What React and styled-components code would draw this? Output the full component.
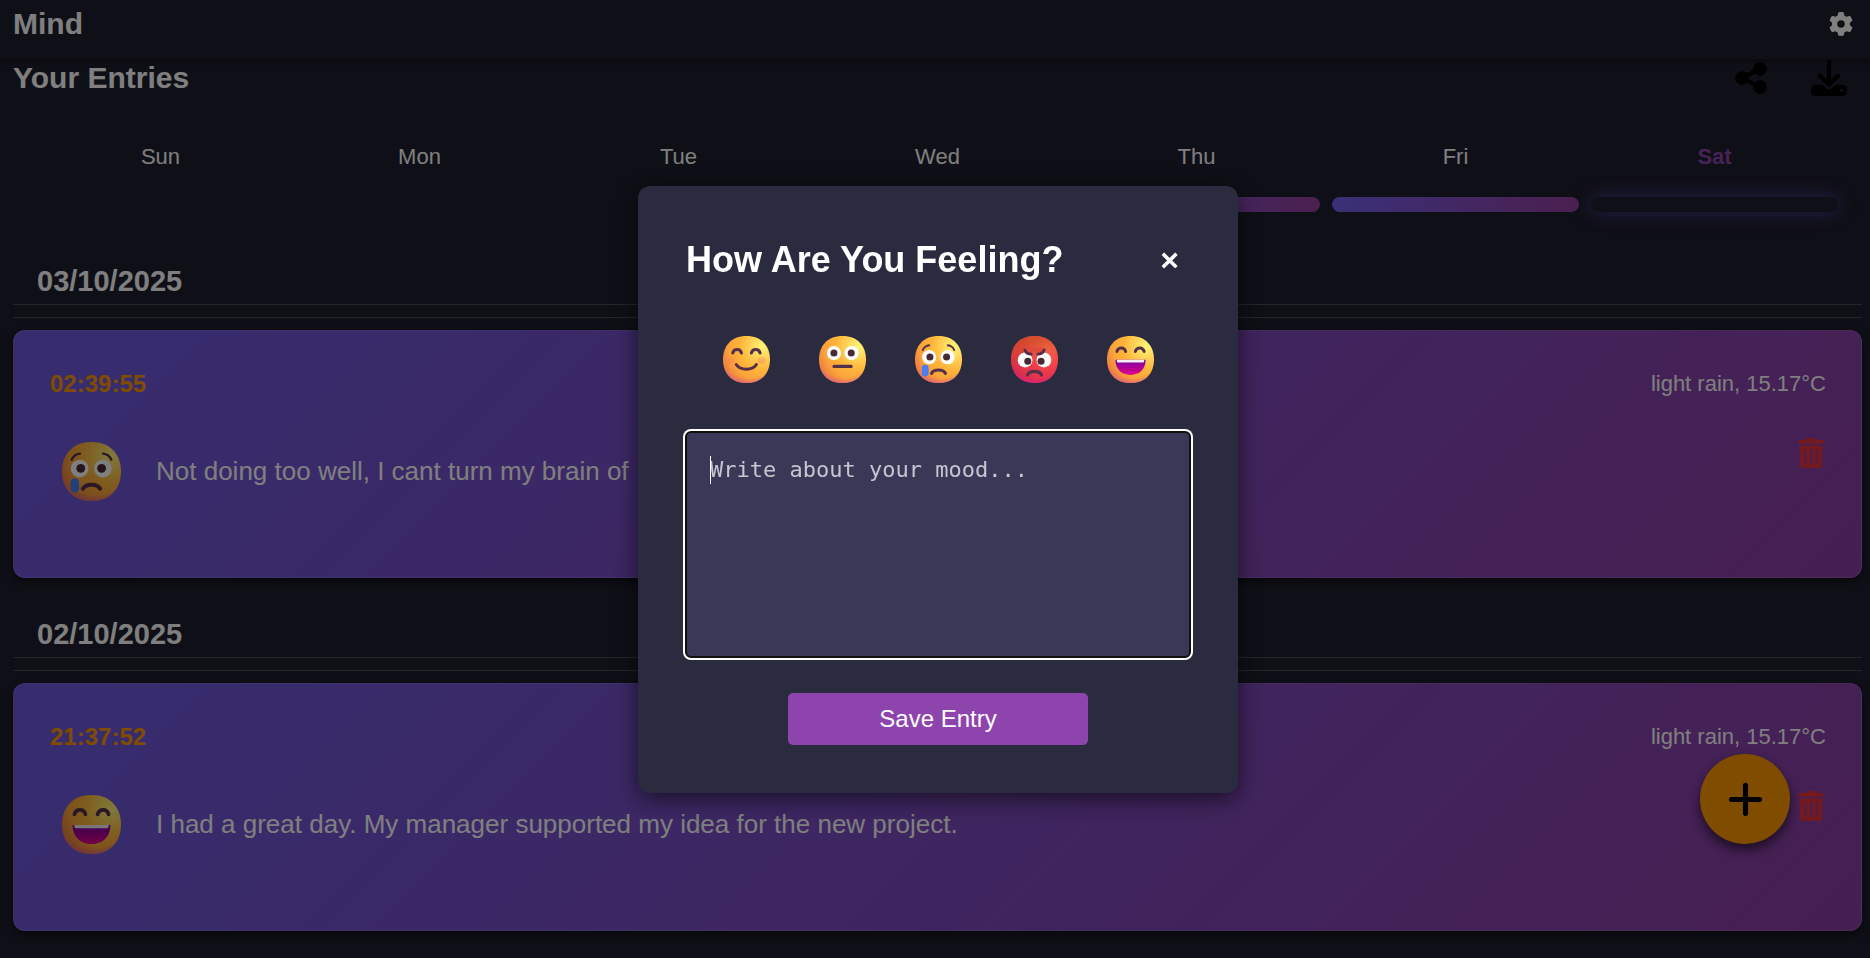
import React from "react";
import styled, { createGlobalStyle, css } from "styled-components";
import { FaGear, FaShareNodes, FaDownload, FaPlus, FaTrashCan } from "react-icons/fa6";

const GlobalStyle = createGlobalStyle`
  *, *::before, *::after { box-sizing: border-box; }
  body {
    margin: 0;
    background: #1e1e2e;
    color: #fff;
    font-family: Arial, "Liberation Sans", sans-serif;
  }
  h1, h2, h3, p { margin: 0; }
  button { font-family: inherit; cursor: pointer; }
`;

const Page = styled.div`
  min-height: 100vh;
`;

const Header = styled.header`
  position: relative;
  display: flex;
  align-items: center;
  justify-content: space-between;
  padding: 6px 17px 17px 13px;
  background: #1e1e2e;
  box-shadow: 0 2px 6px rgba(0, 0, 0, 0.5);
`;

const Heading = styled.h1`
  font-size: 30px;
  line-height: 36px;
  font-weight: 700;
`;

const IconButton = styled.button`
  display: flex;
  padding: 0;
  border: 0;
  background: none;
  color: ${(p) => p.$color};
  font-size: ${(p) => p.$size}px;
`;

const Main = styled.main`
  padding: 1px 8px 24px 13px;
`;

const TitleRow = styled.div`
  display: flex;
  align-items: center;
  justify-content: space-between;
  padding-right: 15px;
`;

const Actions = styled.div`
  display: flex;
  gap: 42px;
`;

const Week = styled.div`
  display: grid;
  grid-template-columns: repeat(7, 1fr);
  gap: 12px;
  padding: 0 24px;
  margin: 48px 0 51px;
`;

const Day = styled.div`
  display: flex;
  flex-direction: column;
  gap: 27px;
  text-align: center;
  font-size: 22px;
  line-height: 26px;
  ${(p) => p.$today && css`
    color: #8e44ad;
    font-weight: 700;
  `}
`;

const DayBar = styled.div`
  height: 15px;
  border-radius: 8px;
  ${(p) => p.$filled && css`
    background: linear-gradient(90deg, #7460f2, #96409e);
  `}
  ${(p) => p.$today && css`
    box-shadow: 0 0 18px rgba(108, 92, 231, 0.6);
  `}
`;

const Group = styled.section`
  margin-bottom: 38px;
`;

const DateHeading = styled.h2`
  padding: 0 24px 5px;
  border-bottom: 1px solid #4b4b50;
  font-size: 29px;
  line-height: 36px;
`;

const Rule = styled.hr`
  margin: 12px 0;
  border: 0;
  border-top: 1px solid #4b4b50;
`;

const Card = styled.article`
  padding: 35px 35px 73px 36px;
  border: 1px solid rgba(255, 255, 255, 0.1);
  border-radius: 12px;
  background: linear-gradient(135deg, #6c5ae0, #8e3ea4);
  box-shadow: 0 4px 8px rgba(0, 0, 0, 0.5);
`;

const CardTop = styled.div`
  display: flex;
  justify-content: space-between;
  align-items: center;
  margin-bottom: 36px;
  line-height: 36px;
`;

const Time = styled.time`
  color: #ff9800;
  font-size: 24px;
  font-weight: 700;
`;

const Weather = styled.span`
  font-size: 22px;
`;

const CardBody = styled.div`
  display: flex;
  justify-content: space-between;
  align-items: flex-start;
`;

const Note = styled.div`
  display: flex;
  align-items: center;
  gap: 34px;
  height: 66px;
  padding-left: 10px;
  font-size: 26px;
`;

const NoteFace = styled.span`
  display: flex;
  justify-content: center;
  width: 62px;
`;

const AddButton = styled.button`
  position: fixed;
  right: 80px;
  bottom: 114px;
  display: flex;
  align-items: center;
  justify-content: center;
  width: 90px;
  height: 90px;
  padding: 0;
  border: 0;
  border-radius: 50%;
  background: #ff9800;
  color: #000;
  font-size: 41px;
  box-shadow: 0 6px 12px rgba(0, 0, 0, 0.6);
`;

const Overlay = styled.div`
  position: fixed;
  inset: 0;
  display: flex;
  align-items: center;
  justify-content: center;
  padding: 21px 0 0 6px;
  background: rgba(0, 0, 0, 0.5);
`;

const Modal = styled.div`
  display: flex;
  flex-direction: column;
  width: 100%;
  max-width: 600px;
  padding: 48px;
  border-radius: 12px;
  background: #2b2b40;
  box-shadow: 0 6px 24px rgba(0, 0, 0, 0.6);
`;

const ModalHeader = styled.div`
  display: flex;
  align-items: center;
  justify-content: space-between;
  line-height: 52px;
`;

const ModalTitle = styled.h2`
  font-size: 36px;
`;

const CloseButton = styled.button`
  width: 41px;
  padding: 0;
  border: 0;
  background: none;
  color: #fff;
  font-size: 32px;
  font-weight: 700;
  line-height: 52px;
`;

const Moods = styled.div`
  display: flex;
  justify-content: center;
  gap: 48px;
  margin: 48px 0;
`;

const MoodButton = styled.button`
  display: flex;
  align-items: center;
  justify-content: center;
  width: 48px;
  height: 50px;
  padding: 0;
  border: 0;
  background: none;
`;

const Field = styled.div`
  position: relative;
  display: flex;
  margin-bottom: 36px;
`;

const Caret = styled.span`
  position: absolute;
  top: 24px;
  left: 24px;
  width: 1px;
  height: 28px;
  background: #fff;
`;

const MoodText = styled.textarea`
  width: 100%;
  height: 225px;
  padding: 24px;
  border: 0;
  border-radius: 5px;
  outline: 2px solid #101010;
  outline-offset: -1px;
  box-shadow: 0 0 0 3px #fff;
  background: #3b3857;
  color: #fff;
  font-family: Consolas, "DejaVu Sans Mono", monospace;
  font-size: 22px;
  line-height: 28px;
  resize: none;
  &::placeholder { color: #c6c6d0; opacity: 1; }
`;

const SaveButton = styled.button`
  align-self: center;
  width: 300px;
  height: 52px;
  padding: 0;
  border: 0;
  border-radius: 5px;
  background: #8e44ad;
  color: #fff;
  font-size: 24px;
`;

const FACE = "M16 30c9.33 0 14-6.27 14-14S25.33 2 16 2 2 8.27 2 16s4.67 14 14 14z";
const INK = "#54304a";

const Stroke = ({ d, w = 1.8, color = INK }) => (
  <path d={d} fill="none" stroke={color} strokeWidth={w} strokeLinecap="round" />
);

const Eyes = ({ left, right, y, pl, pr, py, r = 4.2 }) => (
  <>
    <circle cx={left} cy={y} r={r} fill="#fff" />
    <circle cx={right} cy={y} r={r} fill="#fff" />
    <circle cx={pl} cy={py} r="2.1" fill="#482a36" />
    <circle cx={pr} cy={py} r="2.1" fill="#482a36" />
  </>
);

const features = {
  happy: () => (
    <>
      <ellipse cx="6.9" cy="16.7" rx="2.4" ry="2" fill="#ff7a63" opacity="0.35" />
      <ellipse cx="25" cy="16.7" rx="2.4" ry="2" fill="#ff7a63" opacity="0.35" />
      <Stroke d="M7.8 12.1C8.6 9.4 12.2 9.4 13 12.1" />
      <Stroke d="M18.9 12.1C19.7 9.4 23.3 9.4 24.1 12.1" />
      <Stroke d="M9.9 19C12.3 22.7 19.5 22.7 21.9 19" />
    </>
  ),
  neutral: () => (
    <>
      <Eyes left={10.9} right={21.4} y={12.1} pl={10.9} pr={21.2} py={12.1} />
      <Stroke d="M11 20.1H21.1" w={2} />
    </>
  ),
  sad: () => (
    <>
      <Eyes left={10.4} right={21.4} y={14.6} pl={10.9} pr={20.8} py={14.5} />
      <Stroke d="M6.6 10.4C7.3 8.7 8.6 7.7 10.5 7.5" w={1.1} />
      <Stroke d="M25.4 10.4C24.7 8.7 23.4 7.7 21.5 7.5" w={1.1} />
      <rect x="6.1" y="19.2" width="4" height="6.9" rx="2" fill="#477ef5" />
      <Stroke d="M11.9 24.2C13.3 21.6 18.7 21.6 20.1 24.2" w={1.9} />
    </>
  ),
  angry: () => (
    <>
      <Eyes left={10.4} right={21.6} y={16.3} pl={12} pr={19.9} py={17} r={4.4} />
      <path d="M9 10L14.6 13.6V11.6L17.2 11.6V13.6L23 10L21 9H10z" fill="#df4a3b" />
      <Stroke d="M10.2 10.2C10.8 12 12.3 12.8 14 12.8" w={1.6} />
      <Stroke d="M21.8 10.2C21.2 12 19.7 12.8 18 12.8" w={1.6} />
      <Stroke d="M11.8 25.2C13.2 22.4 18.8 22.4 20.2 25.2" w={1.9} />
    </>
  ),
  grin: ({ id }) => (
    <>
      <linearGradient id={`${id}-mouth`} x1="0" y1="0" x2="0" y2="1">
        <stop offset="0.2" stopColor="#8d009e" />
        <stop offset="1" stopColor="#e50089" />
      </linearGradient>
      <Stroke d="M7.9 11.2C8.7 8.4 12.4 8.4 13.1 11.2" />
      <Stroke d="M18.9 11.2C19.7 8.4 23.3 8.4 24.1 11.2" />
      <path d="M7 16.2H25C25 22 21.2 25.2 16 25.2S7 22 7 16.2z" fill={`url(#${id}-mouth)`} />
      <path d="M7.9 16.2H24.1V17C24.1 17.5 23.8 17.8 23.3 17.8H8.7C8.2 17.8 7.9 17.5 7.9 17z" fill="#f4eef6" />
    </>
  ),
};

function Face({ mood, size }) {
  const id = React.useId();
  const red = mood === "angry";
  const Features = features[mood];
  return (
    <svg width={size} height={size} viewBox="2 2 28 28" role="img" aria-label={mood}>
      <defs>
        <radialGradient id={`${id}-base`} gradientUnits="userSpaceOnUse" cx={red ? 23 : 25.5} cy={red ? 9 : 8.5} r="25">
          <stop offset="0" stopColor={red ? "#fb6a50" : "#fff478"} />
          <stop offset="0.55" stopColor={red ? "#ee3a4a" : "#ffb43a"} />
          <stop offset="0.8" stopColor={red ? "#e0324e" : "#fba43a"} />
          <stop offset="1" stopColor={red ? "#cf2852" : "#ef8340"} />
        </radialGradient>
        <linearGradient id={`${id}-top`} x1="0.3" y1="0" x2="0.5" y2="0.6">
          <stop offset="0" stopColor="#c8501e" stopOpacity={red ? 0.8 : 0} />
          <stop offset="1" stopColor="#c8501e" stopOpacity="0" />
        </linearGradient>
        <radialGradient id={`${id}-rim`} gradientUnits="userSpaceOnUse" cx="17" cy="10" r="21">
          <stop offset="0.82" stopColor={red ? "#d81f78" : "#e0608a"} stopOpacity="0" />
          <stop offset="1" stopColor={red ? "#d81f90" : "#d8609a"} stopOpacity="0.9" />
        </radialGradient>
      </defs>
      <path d={FACE} fill={`url(#${id}-base)`} />
      <path d={FACE} fill={`url(#${id}-top)`} />
      <path d={FACE} fill={`url(#${id}-rim)`} />
      <Features id={id} />
    </svg>
  );
}

const days = [
  { name: "Sun" },
  { name: "Mon" },
  { name: "Tue" },
  { name: "Wed" },
  { name: "Thu", filled: true },
  { name: "Fri", filled: true },
  { name: "Sat", today: true },
];

const entries = [
  {
    date: "03/10/2025",
    time: "02:39:55",
    mood: "sad",
    text: "Not doing too well, I cant turn my brain of",
    weather: "light rain, 15.17°C",
  },
  {
    date: "02/10/2025",
    time: "21:37:52",
    mood: "grin",
    text: "I had a great day. My manager supported my idea for the new project.",
    weather: "light rain, 15.17°C",
  },
];

const moods = ["happy", "neutral", "sad", "angry", "grin"];

export default function App() {
  return (
    <>
      <GlobalStyle />
      <Page>
        <Header>
          <Heading>Mind</Heading>
          <IconButton $size={24} $color="#fff" aria-label="Settings"><FaGear /></IconButton>
        </Header>
        <Main>
          <TitleRow>
            <Heading as="h2">Your Entries</Heading>
            <Actions>
              <IconButton $size={36} $color="#000" aria-label="Share"><FaShareNodes /></IconButton>
              <IconButton $size={36} $color="#000" aria-label="Download"><FaDownload /></IconButton>
            </Actions>
          </TitleRow>
          <Week>
            {days.map((d) => (
              <Day key={d.name} $today={d.today}>
                <span>{d.name}</span>
                <DayBar $filled={d.filled} $today={d.today} />
              </Day>
            ))}
          </Week>
          {entries.map((e) => (
            <Group key={e.date}>
              <DateHeading>{e.date}</DateHeading>
              <Rule />
              <Card>
                <CardTop>
                  <Time>{e.time}</Time>
                  <Weather>{e.weather}</Weather>
                </CardTop>
                <CardBody>
                  <Note>
                    <NoteFace><Face mood={e.mood} size={59} /></NoteFace>
                    <p>{e.text}</p>
                  </Note>
                  <IconButton $size={30} $color="#e8353f" aria-label="Delete entry"><FaTrashCan /></IconButton>
                </CardBody>
              </Card>
            </Group>
          ))}
        </Main>
        <AddButton aria-label="Add entry"><FaPlus /></AddButton>
      </Page>
      <Overlay>
        <Modal role="dialog" aria-modal="true" aria-labelledby="mood-title">
          <ModalHeader>
            <ModalTitle id="mood-title">How Are You Feeling?</ModalTitle>
            <CloseButton aria-label="Close">×</CloseButton>
          </ModalHeader>
          <Moods>
            {moods.map((m) => (
              <MoodButton key={m} aria-label={m}><Face mood={m} size={47} /></MoodButton>
            ))}
          </Moods>
          <Field>
            <MoodText aria-labelledby="mood-title" placeholder="Write about your mood..." />
            <Caret />
          </Field>
          <SaveButton>Save Entry</SaveButton>
        </Modal>
      </Overlay>
    </>
  );
}
